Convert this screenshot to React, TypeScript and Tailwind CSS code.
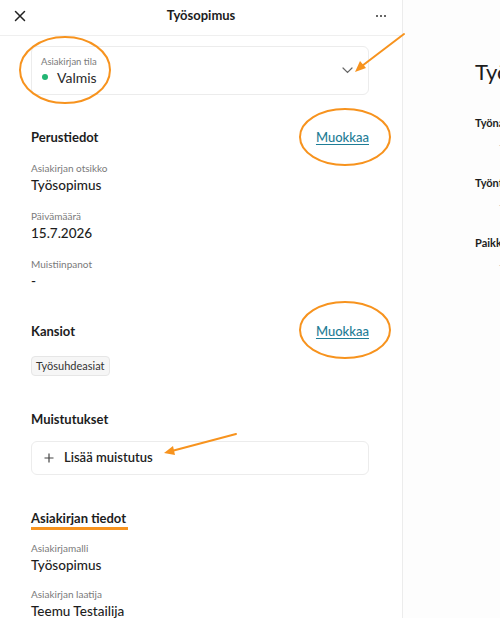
import React from 'react';

const font = { fontFamily: 'Lato, "Open Sans", sans-serif' };

const Field: React.FC<{ label: string; value: string; className?: string }> = ({ label, value, className = '' }) => (
  <div className={className}>
    <div className="text-[10px] leading-[14px] text-[#7a7a7a]">{label}</div>
    <div className="mt-[1px] text-[13.5px] leading-[18px] font-medium text-[#1d1d1d]">{value}</div>
  </div>
);

const SectionHead: React.FC<{ title: string; edit?: boolean; className?: string }> = ({ title, edit, className = '' }) => (
  <div className={`flex items-center justify-between ${className}`}>
    <h2 className="text-[13px] leading-[18px] font-bold text-[#1d1d1d]">{title}</h2>
    {edit && (
      <a href="#" className="text-[13px] leading-[18px] font-medium text-[#1f7d96] underline underline-offset-2">
        Muokkaa
      </a>
    )}
  </div>
);

// oranssit merkinnät kuvakaappauksen päällä
const Annotations: React.FC = () => (
  <svg className="pointer-events-none absolute left-0 top-0" width="500" height="618" viewBox="0 0 500 618">
    <g fill="none" stroke="#f7931e" strokeWidth="2" strokeLinecap="round" strokeLinejoin="round">
      <ellipse cx="65" cy="70" rx="45" ry="33" />
      <ellipse cx="345" cy="137" rx="45" ry="28" />
      <ellipse cx="345" cy="330" rx="45" ry="28" />
      <path d="M404 34 L358 69" />
      <path d="M236 434 L168 452" />
    </g>
    <g fill="#f7931e">
      <path d="M355 72 L360 61 L366 68 Z" />
      <path d="M164 453 L173 446 L175 455 Z" />
    </g>
  </svg>
);

export default function App() {
  return (
    <div className="relative flex h-[618px] w-[500px] overflow-hidden bg-white" style={font}>
      {/* sivupaneeli */}
      <div className="w-[403px] shrink-0 border-r border-[#ececec] bg-white">
        <header className="flex h-[36px] items-center justify-between border-b border-[#efefef] px-[14px] pb-[3px]">
          <svg width="12" height="12" viewBox="0 0 12 12">
            <path d="M1.5 1.5 L10.5 10.5 M10.5 1.5 L1.5 10.5" stroke="#222" strokeWidth="1.5" strokeLinecap="round" />
          </svg>
          <h1 className="text-[13px] font-bold text-[#1d1d1d]">Työsopimus</h1>
          <span className="mr-[2px] flex gap-[2px]">
            <i className="h-[2px] w-[2px] rounded-full bg-[#333]" />
            <i className="h-[2px] w-[2px] rounded-full bg-[#333]" />
            <i className="h-[2px] w-[2px] rounded-full bg-[#333]" />
          </span>
        </header>

        <div className="pl-[31px] pr-[33px]">
          <div className="mt-[10px] flex h-[49px] items-center justify-between rounded-[6px] border border-[#ececec] pl-[9px] pr-[15px]">
            <div>
              <div className="text-[9.5px] leading-[13px] text-[#7a7a7a]">Asiakirjan tila</div>
              <div className="flex items-center gap-[9px] pl-[1px]">
                <span className="h-[6px] w-[6px] rounded-full bg-[#22b573]" />
                <span className="text-[14px] leading-[19px] text-[#2a2a2a]">Valmis</span>
              </div>
            </div>
            <svg width="11" height="7" viewBox="0 0 11 7">
              <path d="M1 1 L5.5 5.5 L10 1" fill="none" stroke="#666" strokeWidth="1.2" strokeLinecap="round" />
            </svg>
          </div>

          <SectionHead title="Perustiedot" edit className="mt-[33px]" />
          <Field label="Asiakirjan otsikko" value="Työsopimus" className="mt-[15px]" />
          <Field label="Päivämäärä" value="15.7.2026" className="mt-[15px]" />
          <Field label="Muistiinpanot" value="-" className="mt-[15px]" />

          <SectionHead title="Kansiot" edit className="mt-[32px]" />
          <div className="mt-[16px] flex">
            <span className="rounded-[4px] border border-[#e6e6e6] bg-[#f6f6f6] px-[4px] py-[1px] text-[11px] leading-[16px] text-[#333]">
              Työsuhdeasiat
            </span>
          </div>

          <SectionHead title="Muistutukset" className="mt-[34px]" />
          <div className="mt-[13px] flex h-[34px] items-center gap-[10px] rounded-[6px] border border-[#ececec] px-[12px]">
            <svg width="10" height="10" viewBox="0 0 10 10">
              <path d="M5 0.5 V9.5 M0.5 5 H9.5" stroke="#444" strokeWidth="1.2" />
            </svg>
            <span className="text-[13px] font-semibold text-[#222]">Lisää muistutus</span>
          </div>

          <div className="mt-[34px] flex">
            <h2 className="border-b-[3px] border-[#f7931e] pr-[2px] text-[13px] leading-[18px] font-bold text-[#1d1d1d]">
              Asiakirjan tiedot
            </h2>
          </div>
          <Field label="Asiakirjamalli" value="Työsopimus" className="mt-[11px]" />
          <Field label="Asiakirjan laatija" value="Teemu Testailija" className="mt-[13px]" />
        </div>
      </div>

      {/* asiakirjan esikatselu */}
      <div className="min-w-0 flex-1 overflow-hidden bg-[#fdfdfd] pl-[72px] pt-[58px]">
        <div className="w-[300px]">
          <div className="text-[22px] leading-[28px] text-[#1d1d1d]">Työsopimus</div>
          <div className="mt-[29px] text-[11px] font-bold text-[#1d1d1d]">Työnantaja</div>
          <div className="mt-[6px] pl-[24px] text-[9px] text-[#999]">-</div>
          <div className="mt-[24px] text-[11px] font-bold text-[#1d1d1d]">Työntekijä</div>
          <div className="mt-[6px] pl-[24px] text-[9px] text-[#999]">-</div>
          <div className="mt-[24px] text-[11px] font-bold text-[#1d1d1d]">Paikka</div>
          <div className="mt-[6px] pl-[24px] text-[9px] text-[#999]">-</div>
        </div>
      </div>

      <Annotations />
    </div>
  );
}
